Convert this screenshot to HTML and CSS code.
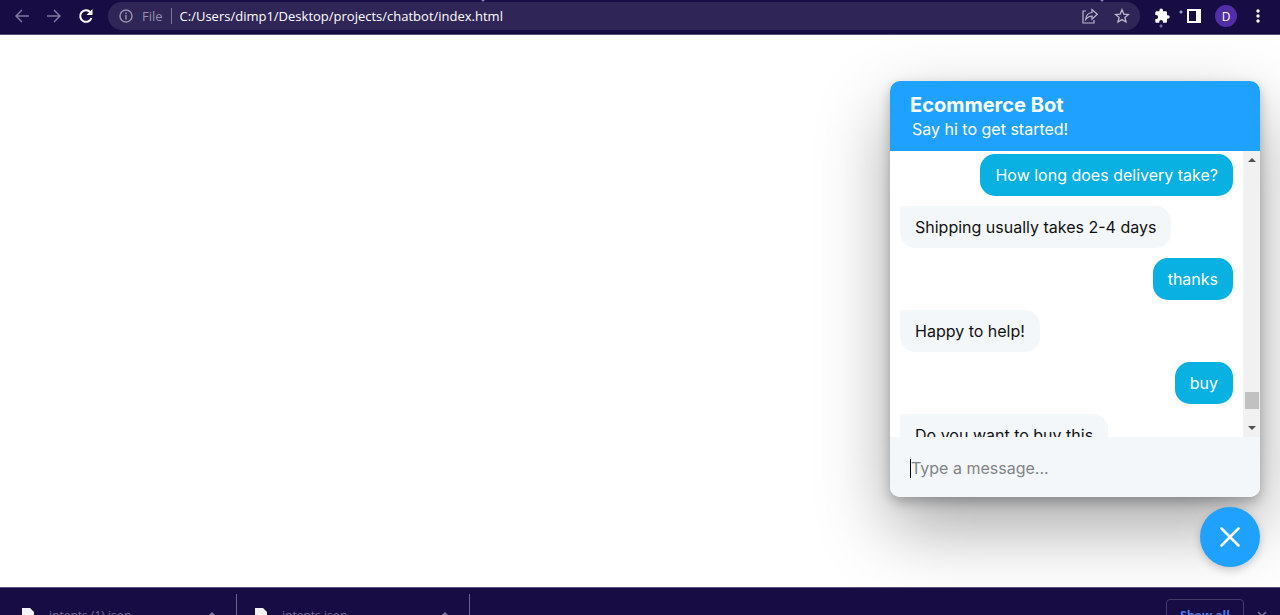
FILE: index.html
```html
<!DOCTYPE html>
<html lang="en">
<head>
<meta charset="utf-8">
<title>Ecommerce Bot</title>
<link rel="stylesheet" href="styles.css">
</head>
<body>
<header class="toolbar">
  <nav class="nav">
    <button class="icon-btn dim" aria-label="Back"><svg viewBox="0 0 16 16" width="16" height="16"><path d="M15 8H2M8 2L2 8l6 6"/></svg></button>
    <button class="icon-btn dim" aria-label="Forward"><svg viewBox="0 0 16 16" width="16" height="16"><path d="M1 8h13M8 2l6 6-6 6"/></svg></button>
    <button class="icon-btn" aria-label="Reload"><svg viewBox="0 0 16 16" width="16" height="16"><path stroke-width="2" d="M13.500 10A5.800 5.800 0 1 1 12.300 4.100"/><path class="solid" d="M14.500 1v6H8.500z"/></svg></button>
  </nav>
  <div class="omnibox">
    <svg class="info" viewBox="0 0 16 16" width="16" height="16"><circle cx="8" cy="8" r="6"/><path d="M8 7v4.500M8 4.500v1.400"/></svg>
    <span class="scheme">File</span>
    <span class="bar"></span>
    <input class="url" aria-label="Address" value="C:/Users/dimp1/Desktop/projects/chatbot/index.html">
    <button class="icon-btn soft" aria-label="Share"><svg viewBox="0 0 16 16" width="16" height="16"><path stroke-width="1.200" d="M4 3H1v12h11v-3M10 1.500v3C6 4.800 4 7.500 3.700 11.500 5.500 9 7.500 8.200 10 8.200v3L15.300 6.300z"/></svg></button>
    <button class="icon-btn soft" aria-label="Bookmark"><svg viewBox="0 0 16 16" width="16" height="16"><path stroke-width="1.300" d="M8 1.800l1.800 4.300 4.600.4-3.500 3 1.100 4.500L8 11.600 4 14l1.100-4.500-3.500-3 4.600-.4z"/></svg></button>
  </div>
  <div class="actions">
    <button class="icon-btn" aria-label="Extensions"><svg viewBox="0 0 16 16" width="16" height="16"><path class="solid" d="M14 7.300h-1V4.600c0-.8-.6-1.400-1.400-1.400H9V2.400a1.800 1.800 0 0 0-3.600 0v.8H2.700c-.8 0-1.400.6-1.400 1.400v2.500h.9a1.900 1.900 0 0 1 0 3.800h-.9v2.500c0 .8.600 1.400 1.400 1.400h2.500v-.9a1.900 1.900 0 0 1 3.800 0v.9h2.600c.8 0 1.400-.6 1.400-1.400v-2.700h1a1.700 1.700 0 0 0 0-3.400z"/></svg></button>
    <button class="icon-btn" aria-label="Side panel"><svg viewBox="0 0 16 16" width="16" height="16"><path stroke-width="2" d="M2 2h12v12H2z"/><path class="solid" d="M10 2h5v12h-5z"/></svg></button>
    <button class="avatar" aria-label="Profile">D</button>
    <button class="icon-btn" aria-label="Menu"><svg viewBox="0 0 16 16" width="16" height="16"><circle class="solid" cx="8" cy="3" r="1.700"/><circle class="solid" cx="8" cy="8" r="1.700"/><circle class="solid" cx="8" cy="13" r="1.700"/></svg></button>
  </div>
</header>

<main class="page">
  <section class="chat">
    <header class="chat-head">
      <h1>Ecommerce Bot</h1>
      <p>Say hi to get started!</p>
    </header>
    <div class="chat-body">
      <div class="messages">
        <p class="msg user">How long does delivery take?</p>
        <p class="msg">Shipping usually takes 2-4 days</p>
        <p class="msg user">thanks</p>
        <p class="msg">Happy to help!</p>
        <p class="msg user">buy</p>
        <p class="msg">Do you want to buy this</p>
      </div>
      <div class="scroll">
        <svg viewBox="0 0 8 4" width="8" height="4"><path d="M0 4l4-4 4 4z"/></svg>
        <span class="thumb"></span>
        <svg viewBox="0 0 8 4" width="8" height="4"><path d="M0 0l4 4 4-4z"/></svg>
      </div>
    </div>
    <label class="composer">
      <span class="caret"></span>
      <input type="text" placeholder="Type a message..." aria-label="Message">
    </label>
  </section>
  <button class="toggle" aria-label="Close chat"><svg viewBox="0 0 20 20" width="20" height="20"><path d="M1.500 1.500l17 17M18.500 1.500l-17 17"/></svg></button>
</main>

<footer class="shelf">
  <div class="download">
    <svg viewBox="0 0 12 16" width="12" height="16"><path d="M0 0h8l4 4v12H0z"/></svg>
    <a href="#">intents (1).json</a>
    <button class="icon-btn dim" aria-label="Options"><svg viewBox="0 0 8 6" width="8" height="6"><path d="M1 5l3-3 3 3"/></svg></button>
  </div>
  <div class="download">
    <svg viewBox="0 0 12 16" width="12" height="16"><path d="M0 0h8l4 4v12H0z"/></svg>
    <a href="#">intents.json</a>
    <button class="icon-btn dim" aria-label="Options"><svg viewBox="0 0 8 6" width="8" height="6"><path d="M1 5l3-3 3 3"/></svg></button>
  </div>
  <button class="show-all">Show all</button>
  <button class="icon-btn dim dismiss" aria-label="Close"><svg viewBox="0 0 10 10" width="10" height="10"><path d="M1 1l8 8M9 1l-8 8"/></svg></button>
</footer>
</body>
</html>
```
FILE: styles.css
```css
* { box-sizing: border-box; }
body {
  margin: 0;
  height: 100vh;
  display: flex;
  flex-direction: column;
  overflow: hidden;
  background: #fff;
  font-family: Inter, sans-serif;
}
h1, p { margin: 0; }
button, input {
  border: 0;
  padding: 0;
  background: none;
  font: inherit;
  color: inherit;
  outline: 0;
}
svg { display: block; flex: none; fill: none; stroke: currentColor; stroke-width: 1.5; }
.solid { fill: currentColor; stroke: none; }
.icon-btn { color: #fff; }
.icon-btn.dim { color: #7d7799; }
.icon-btn.soft { color: #bdb8cd; }

.toolbar {
  flex: none;
  display: flex;
  align-items: center;
  height: 35px;
  padding: 0 14px;
  background:
    radial-gradient(circle at 1181px 12px, #8fa0d8 1px, transparent 2px),
    radial-gradient(circle at 1161px 26px, #6f6aa8 1px, transparent 2px),
    radial-gradient(circle at 1102px 0, #8a84b4 1px, transparent 2px),
    radial-gradient(circle at 483px 0, #8a84b4 1px, transparent 2px),
    #180c45;
  border-bottom: 1px solid #5a5277;
  color: #fff;
  font-family: "Open Sans", sans-serif;
  font-size: 13px;
}
.nav { display: flex; gap: 16px; padding-bottom: 2px; }
.omnibox {
  flex: 1;
  display: flex;
  align-items: center;
  height: 28px;
  margin: 0 14px 2px;
  padding: 0 10px;
  border-radius: 14px;
  background: #2f2556;
}
.info { color: #9590ab; }
.scheme { margin-left: 8px; color: #9590ab; }
.bar { width: 1px; height: 16px; margin: 0 8px; background: #7d7799; }
.url { flex: 1; min-width: 0; }
.omnibox .soft { margin-left: 16px; }
.actions { display: flex; align-items: center; gap: 16px; padding-bottom: 2px; }
.avatar {
  width: 22px;
  height: 22px;
  margin: 0 -3px;
  border-radius: 50%;
  background: #512da8;
  font-size: 12px;
}

.page {
  flex: 1;
  min-height: 0;
  display: flex;
  flex-direction: column;
  align-items: flex-end;
  justify-content: flex-end;
  gap: 10px;
  padding: 20px;
  overflow: hidden;
}
.chat {
  display: flex;
  flex-direction: column;
  width: 370px;
  border-radius: 10px;
  background: #fff;
  box-shadow: 0 5px 12px rgba(0, 0, 0, .25), 0 30px 70px rgba(0, 0, 0, .35);
}
.chat-head {
  padding: 12px 20px 10px;
  border-radius: 10px 10px 0 0;
  background: #1fa2ff;
  color: #fff;
}
.chat-head h1 { font-size: 20px; line-height: 24px; font-weight: 700; }
.chat-head p { padding-left: 2px; font-size: 16px; line-height: 24px; }
.chat-body { display: flex; height: 286px; overflow: hidden; }
.messages {
  flex: 1;
  display: flex;
  flex-direction: column;
  align-items: flex-start;
  gap: 10px;
  padding: 3px 10px;
}
.msg {
  flex: none;
  padding: 10px 15px;
  border-radius: 2px 15px 15px 15px;
  background: #f3f7fa;
  color: #111;
  font-size: 16px;
  line-height: 22px;
}
.msg.user { align-self: flex-end; border-radius: 15px; background: #09b0e2; color: #fff; }
.scroll {
  display: flex;
  flex-direction: column;
  align-items: center;
  width: 17px;
  padding: 7px 0;
  background: #f1f1f1;
}
.scroll svg { fill: #505050; stroke: none; }
.thumb { width: 14px; height: 17px; margin: auto 0 17px; background: #c1c1c1; }
.composer {
  display: flex;
  align-items: center;
  height: 60px;
  padding: 2px 20px 0;
  border-radius: 0 0 10px 10px;
  background: #f3f7fa;
}
.composer input { flex: 1; min-width: 0; font-size: 16px; }
.composer input::placeholder { color: #808387; opacity: 1; }
.caret { width: 1px; height: 19px; background: #000; }
.toggle {
  display: grid;
  place-items: center;
  width: 60px;
  height: 60px;
  border-radius: 50%;
  background: #1fa2ff;
  color: #fff;
  box-shadow: 0 3px 8px rgba(0, 0, 0, .2);
}
.toggle svg { stroke-width: 2.5; stroke-linecap: round; }

.shelf {
  flex: none;
  display: flex;
  align-items: flex-start;
  height: 28px;
  overflow: hidden;
  background: #180c45;
  border-top: 1px solid #5a5277;
  font-family: "Open Sans", sans-serif;
  font-size: 12px;
}
.download {
  display: flex;
  align-items: flex-start;
  width: 233px;
  height: 40px;
  margin-top: 6px;
  padding: 14px 20px 0 18px;
  border-right: 1px solid #6b638a;
}
.download:first-child { width: 237px; padding-left: 22px; }
.download > svg { fill: #f4f4f8; stroke: none; }
.download a {
  flex: 1;
  margin-left: 15px;
  color: #746d94;
  text-decoration: none;
  line-height: 16px;
}
.download .icon-btn { padding-top: 3px; }
.show-all {
  width: 78px;
  height: 32px;
  margin: 11px 13px 0 auto;
  border: 1px solid #453b69;
  border-radius: 4px;
  color: #4a78e8;
  font-weight: 700;
}
.dismiss { margin: 23px 13px 0 0; }
```
